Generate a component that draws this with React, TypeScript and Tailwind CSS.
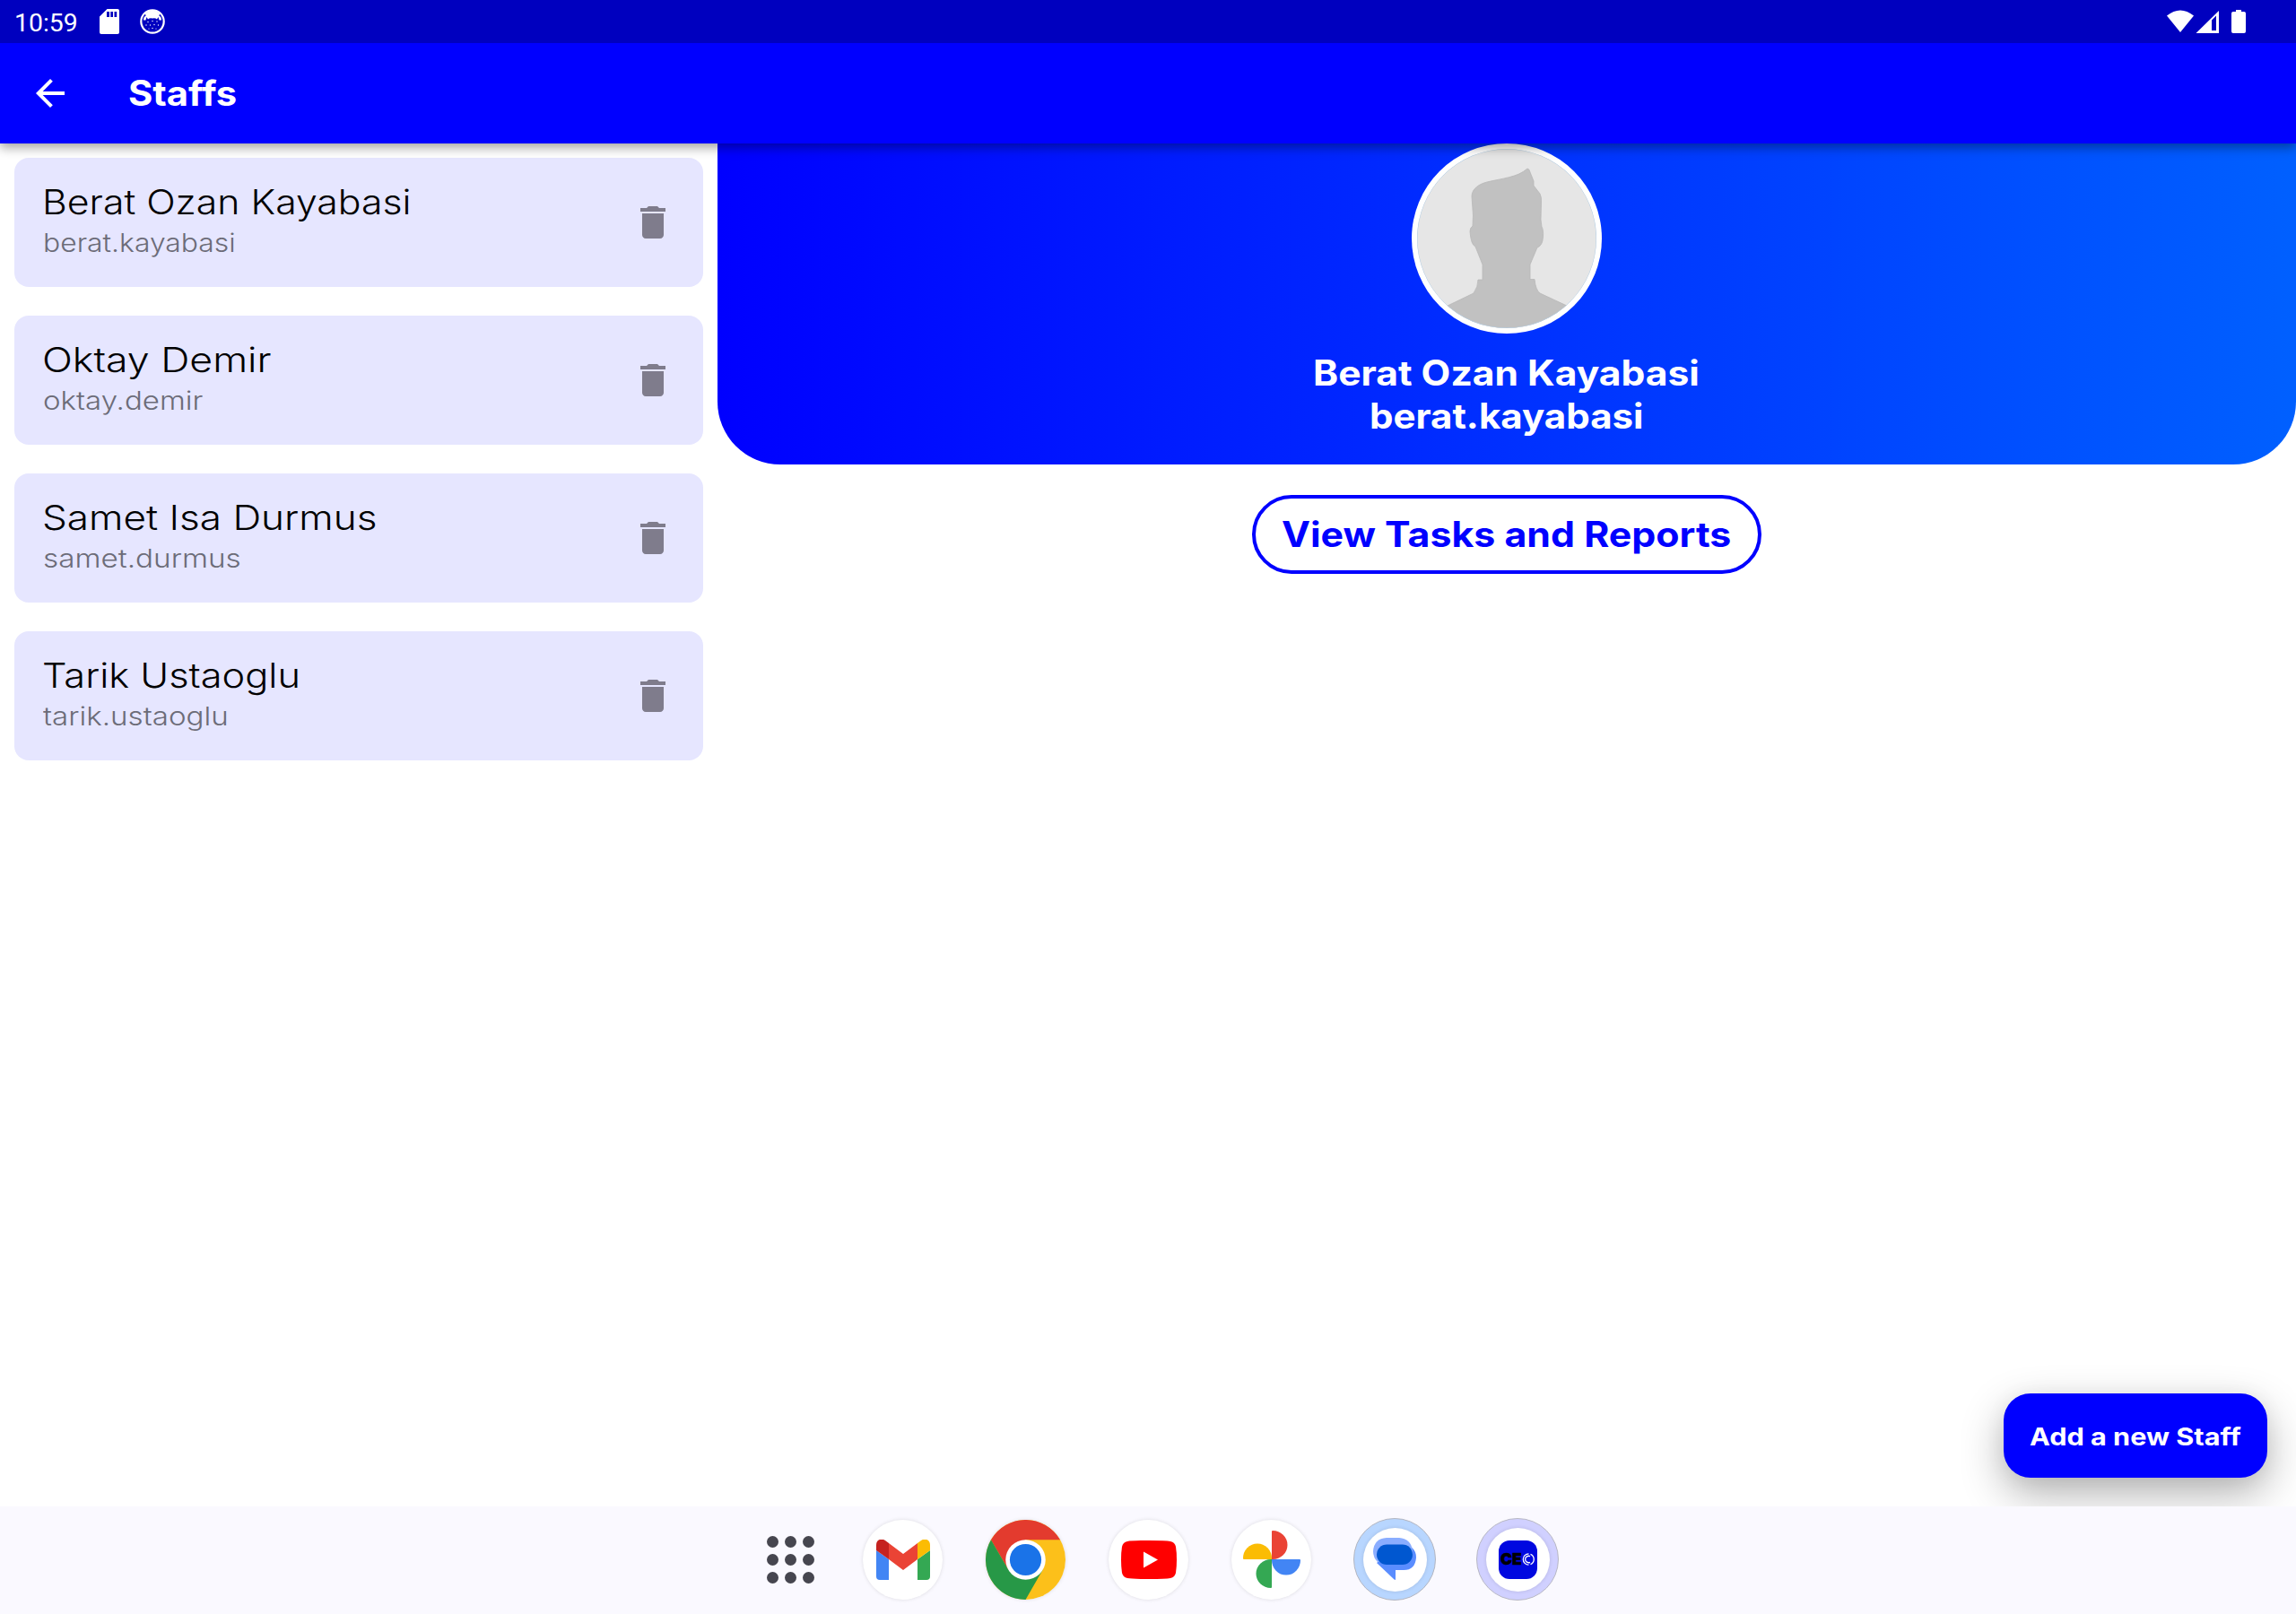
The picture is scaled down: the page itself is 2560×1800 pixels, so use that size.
import { useLayoutEffect, useRef, useState } from "react";
import type { ReactNode } from "react";

type FitProps = { text: string; width: number; className?: string };

/** Single line of text stretched horizontally to an exact advance width. */
function Fit({ text, width, className = "" }: FitProps) {
  const ref = useRef<HTMLSpanElement>(null);
  const [scale, setScale] = useState(1);
  useLayoutEffect(() => {
    if (ref.current) setScale(width / ref.current.offsetWidth);
  }, [width, text]);
  return (
    <div className={`whitespace-nowrap ${className}`} style={{ width }}>
      <span ref={ref} className="inline-block origin-left" style={{ transform: `scaleX(${scale})` }}>
        {text}
      </span>
    </div>
  );
}

const staff = [
  { name: "Berat Ozan Kayabasi", nameWidth: 412, user: "berat.kayabasi", userWidth: 215 },
  { name: "Oktay Demir", nameWidth: 255, user: "oktay.demir", userWidth: 178 },
  { name: "Samet Isa Durmus", nameWidth: 373, user: "samet.durmus", userWidth: 221 },
  { name: "Tarik Ustaoglu", nameWidth: 288, user: "tarik.ustaoglu", userWidth: 207 },
];

function StatusBar() {
  return (
    <div className="flex h-12 items-center justify-between bg-[#0000bf] pl-4 text-white">
      <div className="flex items-center">
        <Fit text="10:59" width={71} className="pt-[3px] font-[Roboto] text-[28px] leading-none" />
        <svg className="ml-6 h-7 w-[22px]" viewBox="0 0 22 28">
          <path fill="#fff" fillRule="evenodd" d="M8.500 0H20a2 2 0 0 1 2 2v24a2 2 0 0 1-2 2H2a2 2 0 0 1-2-2V8.500zM8 3v6h3V3zM12.300 3v6h2.700V3zM16.500 3v6h2.700V3z" />
        </svg>
        <svg className="ml-[23px] h-7 w-7" viewBox="0 0 28 28">
          <circle cx="14" cy="14" r="12.700" fill="none" stroke="#fff" strokeWidth="2.200" />
          <path fill="#fff" d="M6 5Q14-2 22 5L21.500 8Q24 8 24 12.500L21.500 12.500 20.500 9 19 11.500Q17 9.500 14 10.500Q11 9.500 9 11.500L7.500 9 6.500 12.500 4 12.500Q4 8 6.500 8Z" />
          <g fill="#fff">
            <circle cx="9" cy="14.500" r=".7" /><circle cx="14" cy="13.500" r=".7" /><circle cx="19" cy="14" r=".7" />
            <circle cx="7" cy="18" r=".7" /><circle cx="11.500" cy="18" r=".7" /><circle cx="16" cy="17.500" r=".7" />
            <circle cx="20.500" cy="18" r=".7" /><circle cx="14" cy="21.500" r=".7" /><circle cx="10" cy="22" r=".6" /><circle cx="18" cy="22" r=".6" />
          </g>
        </svg>
      </div>
      <svg className="mr-[54px] h-[30px] w-[92px]" viewBox="0 0 92 30">
        <path fill="#fff" d="M2 8.500Q17-3.500 32 8.500L17 27Z" />
        <path fill="#fff" fillRule="evenodd" d="M60 3V28H34.500ZM52 13.500V25h5V8.500Z" />
        <path fill="#fff" d="M79 2h6v2h3q2 0 2 2v20q0 2-2 2H76q-2 0-2-2V6q0-2 2-2h3z" />
      </svg>
    </div>
  );
}

function AppBar() {
  return (
    <div className="flex h-28 items-center bg-[#0000ff] pl-8 text-white">
      <svg className="size-12" viewBox="0 0 24 24">
        <path fill="#fff" d="M20 11H7.830l5.590-5.590L12 4l-8 8 8 8 1.410-1.410L7.830 13H20v-2z" />
      </svg>
      <Fit text="Staffs" width={121} className="ml-[63px] text-[39px] leading-12 font-bold" />
    </div>
  );
}

function StaffCard({ s }: { s: (typeof staff)[number] }) {
  return (
    <div className="flex h-36 items-center justify-between rounded-2xl bg-[#e6e6ff] px-8">
      <div className="-mt-[7px]">
        <Fit text={s.name} width={s.nameWidth} className="-ml-px text-[38.5px] leading-12 font-light text-black" />
        <Fit text={s.user} width={s.userWidth} className="mt-1 text-[28px] leading-9 font-light text-[#6c6c78]" />
      </div>
      <svg className="size-12" viewBox="0 0 24 24">
        <path fill="#7f7c8c" d="M6 19c0 1.100.9 2 2 2h8c1.100 0 2-.9 2-2V7H6v12zM19 4h-3.500l-1-1h-5l-1 1H5v2h14V4z" />
      </svg>
    </div>
  );
}

function Avatar() {
  return (
    <svg className="size-[212px]" viewBox="0 0 212 212">
      <defs>
        <clipPath id="face"><circle cx="106" cy="106" r="100" /></clipPath>
      </defs>
      <circle cx="106" cy="106" r="106" fill="#fff" />
      <g clipPath="url(#face)">
        <rect width="212" height="212" fill="#e6e6e6" />
        <path
          fill="#c1c1c1"
          stroke="#b8b8b8"
          strokeWidth=".8"
          d="M67 59C67 50 76 45 84 43C100 39 118 38 129 28Q131 28 132 32L136 42V47L143 56Q145 60 144.500 66L144 85L145 93Q147 96 146.500 104Q146 114 140 116L132 135V151.500H137Q138 163 143 167L173 181L190 212H20L40 181L69 167Q74 160 74 152H79V135L71 115Q66 113 65 98Q65 94 68 92L68.500 80Z"
        />
        <circle cx="106" cy="106" r="100" fill="none" stroke="#b4cfe6" strokeWidth="1" />
      </g>
    </svg>
  );
}

function Round({ children, className = "" }: { children: ReactNode; className?: string }) {
  return (
    <div className={`flex size-[89px] items-center justify-center rounded-full bg-white shadow-[0_0_4px_rgba(0,0,0,0.12)] ${className}`}>
      {children}
    </div>
  );
}

function Dock() {
  return (
    <div className="flex h-30 items-center bg-[#faf9ff] pb-[2px] pl-[855px]">
      <div className="grid grid-cols-3 gap-[7px]">
        {Array.from({ length: 9 }, (_, i) => (
          <div key={i} className="size-[13px] rounded-full bg-[#46464f]" />
        ))}
      </div>
      <Round className="ml-[54px]">
        <svg className="h-[45px] w-[60px]" viewBox="0 0 60 45">
          <path fill="#4285f4" d="M0 12V41a4 4 0 0 0 4 4H14V22z" />
          <path fill="#34a853" d="M60 12V41a4 4 0 0 1-4 4H46V22z" />
          <path fill="#c5221f" d="M0 12V6C0 0 6-2 10 1L14 4V22z" />
          <path fill="#fbbc04" d="M60 12V6C60 0 54-2 50 1L46 4V22z" />
          <path fill="#ea4335" d="M14 4L30 16L46 4V22L30 34L14 22z" />
        </svg>
      </Round>
      <Round className="ml-12">
        <svg className="size-[89px]" viewBox="0 0 89 89">
          <circle cx="44.500" cy="44.500" r="44.500" fill="#fcc01a" />
          <path fill="#e33b2e" d="M5.960 22.250A44.500 44.500 0 0 1 83.040 22.250H44.500L25.230 55.600Z" />
          <path fill="#279847" d="M5.960 22.250A44.500 44.500 0 0 0 44.500 89L63.770 55.600L25.230 55.600Z" />
          <circle cx="44.500" cy="44.500" r="22.250" fill="#fff" />
          <circle cx="44.500" cy="44.500" r="17.600" fill="#1a73e8" />
        </svg>
      </Round>
      <Round className="ml-12">
        <svg className="h-[43px] w-[62px]" viewBox="0 0 62 43">
          <path fill="#f00" d="M31 0Q50 0 55 1Q60 2 61 7Q62 13 62 21.500T61 36Q60 41 55 42Q50 43 31 43T7 42Q2 41 1 36Q0 30 0 21.500T1 7Q2 2 7 1Q12 0 31 0Z" />
          <path fill="#fff" d="M25 12.500L41 21.500L25 30.500Z" />
        </svg>
      </Round>
      <Round className="ml-12">
        <svg className="size-16" viewBox="0 0 64 64">
          <path fill="#ea4335" d="M32 32V1Q32 0 33 0A16.500 16 0 0 1 33 32Z" />
          <path fill="#4285f4" d="M32 32H63Q64 32 64 33A16 16.500 0 0 1 32 33Z" />
          <path fill="#34a853" d="M32 32V63Q32 64 31 64A16.500 16 0 0 1 31 32Z" />
          <path fill="#fbbc04" d="M32 32H1Q0 32 0 31A16 16.500 0 0 1 32 31Z" />
        </svg>
      </Round>
      <div className="ml-[47px] flex size-[92px] items-center justify-center rounded-full border border-[#b4b6c0] bg-[#b8d6ff]">
        <Round className="size-[71px]!">
          <svg className="h-12 w-12" viewBox="0 0 48 48">
            <path fill="#5a8dff" d="M30 7Q48 8 48 22Q47 36 34 36H25V46Q25 48 23 46L4 28Z" />
            <path fill="#8aadff" d="M15 0H29Q42 1 44 14L44 20L5 27Q0 22 0 15Q1 1 15 0Z" />
            <rect x="4" y="7.500" width="40" height="22.500" rx="11.250" fill="#0057d0" />
          </svg>
        </Round>
      </div>
      <div className="ml-[45px] flex size-[92px] items-center justify-center rounded-full border border-[#b9b9c4] bg-[#d0d0ff]">
        <Round className="size-[71px]!">
          <div className="flex size-[43px] items-center justify-center rounded-xl bg-[#0008e0]">
            <Fit text="CE" width={24} className="text-[18px] leading-none font-black text-black [-webkit-text-stroke:0.6px_black]" />
            <svg className="size-[14px]" viewBox="0 0 14 14" fill="none" stroke="#fff">
              <path d="M7.500 .8A6.200 6.200 0 1 0 7.500 13.200M9.500 1.300A6.200 6.200 0 0 1 9.500 12.700" strokeWidth="1.300" />
              <path d="M9 3.700A3.700 3.700 0 1 0 9 10.300" strokeWidth="1.300" />
            </svg>
          </div>
        </Round>
      </div>
    </div>
  );
}

export default function App() {
  return (
    <div className="flex h-[1800px] w-[2560px] flex-col overflow-hidden bg-white font-[Inter,sans-serif]">
      <div className="relative z-10 shadow-[0_4px_12px_rgba(0,0,0,0.4)]">
        <StatusBar />
        <AppBar />
      </div>
      <div className="relative flex flex-1">
        <div className="flex w-[800px] flex-col gap-8 p-4">
          {staff.map((s) => (
            <StaffCard key={s.user} s={s} />
          ))}
        </div>
        <div className="flex flex-1 flex-col items-center">
          <div className="flex h-[358px] w-full flex-col items-center rounded-b-[70px] bg-linear-to-r/srgb from-[#0000ff] to-[#0060ff] text-white">
            <Avatar />
            <Fit text="Berat Ozan Kayabasi" width={431} className="mt-5 mr-[2px] text-[39px] leading-12 font-bold" />
            <Fit text="berat.kayabasi" width={305} className="mr-[2px] text-[39px] leading-12 font-bold" />
          </div>
          <button className="mt-[34px] flex h-22 w-[568px] items-center justify-center rounded-full border-4 border-[#0000ff] text-[#0000ff]">
            <Fit text="View Tasks and Reports" width={501} className="mr-[2px] text-left text-[39px] leading-12 font-bold" />
          </button>
        </div>
        <button className="absolute right-8 bottom-8 flex h-[94px] w-[294px] items-center justify-center rounded-[30px] bg-[#0000ff] pt-[3px] text-white shadow-[0_18px_48px_rgba(0,0,0,0.3),0_2px_24px_rgba(0,0,0,0.05)]">
          <Fit text="Add a new Staff" width={236} className="text-left text-[27px] leading-8 font-bold" />
        </button>
      </div>
      <div className="relative z-10">
        <Dock />
      </div>
    </div>
  );
}
